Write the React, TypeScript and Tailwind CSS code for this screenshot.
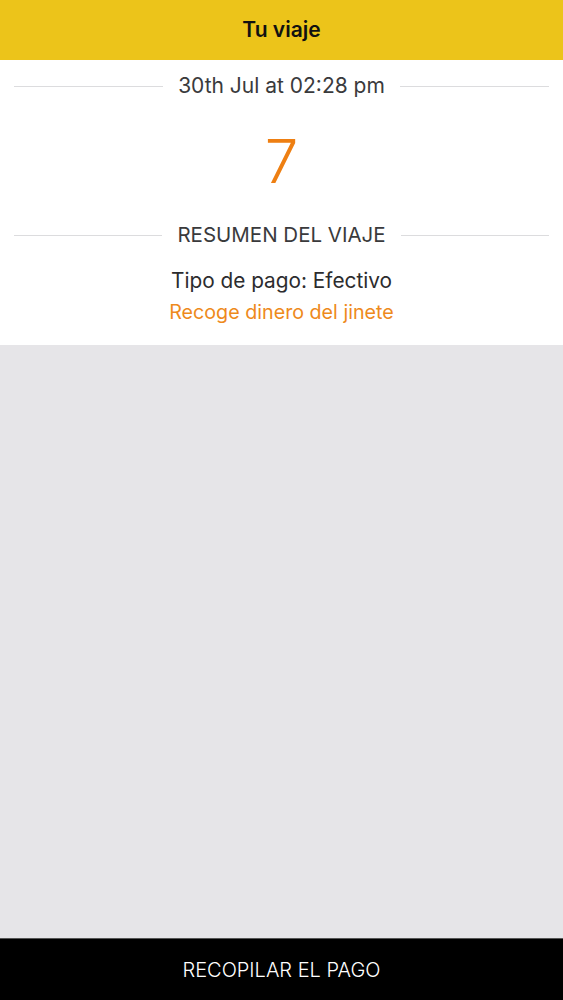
export default function App() {
  return (
    <div
      className="flex h-[1000px] w-full flex-col bg-[#e6e5e8]"
      style={{ fontFamily: 'Inter, "Noto Sans", sans-serif' }}
    >
      <header className="flex h-[60px] shrink-0 items-center justify-center bg-[#ecc41a]">
        <h1 className="text-[21px] font-semibold text-[#111]">Tu viaje</h1>
      </header>

      <section className="flex shrink-0 flex-col items-center bg-white px-[14px] pb-[20px] pt-[12px]">
        <div className="flex w-full items-center gap-[15px]">
          <div className="h-px flex-1 bg-[#dcdcde]" />
          <span className="text-[21px] leading-[28px] text-[#3a3a3c]">30th Jul at 02:28 pm</span>
          <div className="h-px flex-1 bg-[#dcdcde]" />
        </div>

        <div className="mt-[26px] text-[60px] font-light leading-[70px] text-[#ee7f12]">7</div>

        <div className="mt-[25px] flex w-full items-center gap-[15px]">
          <div className="h-px flex-1 bg-[#dcdcde]" />
          <span className="text-[20.5px] leading-[28px] text-[#3a3a3c]">RESUMEN DEL VIAJE</span>
          <div className="h-px flex-1 bg-[#dcdcde]" />
        </div>

        <p className="mt-[18px] text-[20.8px] leading-[28px] text-[#2c2c2e]">Tipo de pago: Efectivo</p>
        <p className="mt-[4px] text-[19.7px] leading-[26px] text-[#ee8a1c]">Recoge dinero del jinete</p>
      </section>

      <div className="flex-1" />

      <button className="h-[62px] shrink-0 border-t border-[#555] bg-black text-[20px] font-light text-white">
        RECOPILAR EL PAGO
      </button>
    </div>
  );
}
